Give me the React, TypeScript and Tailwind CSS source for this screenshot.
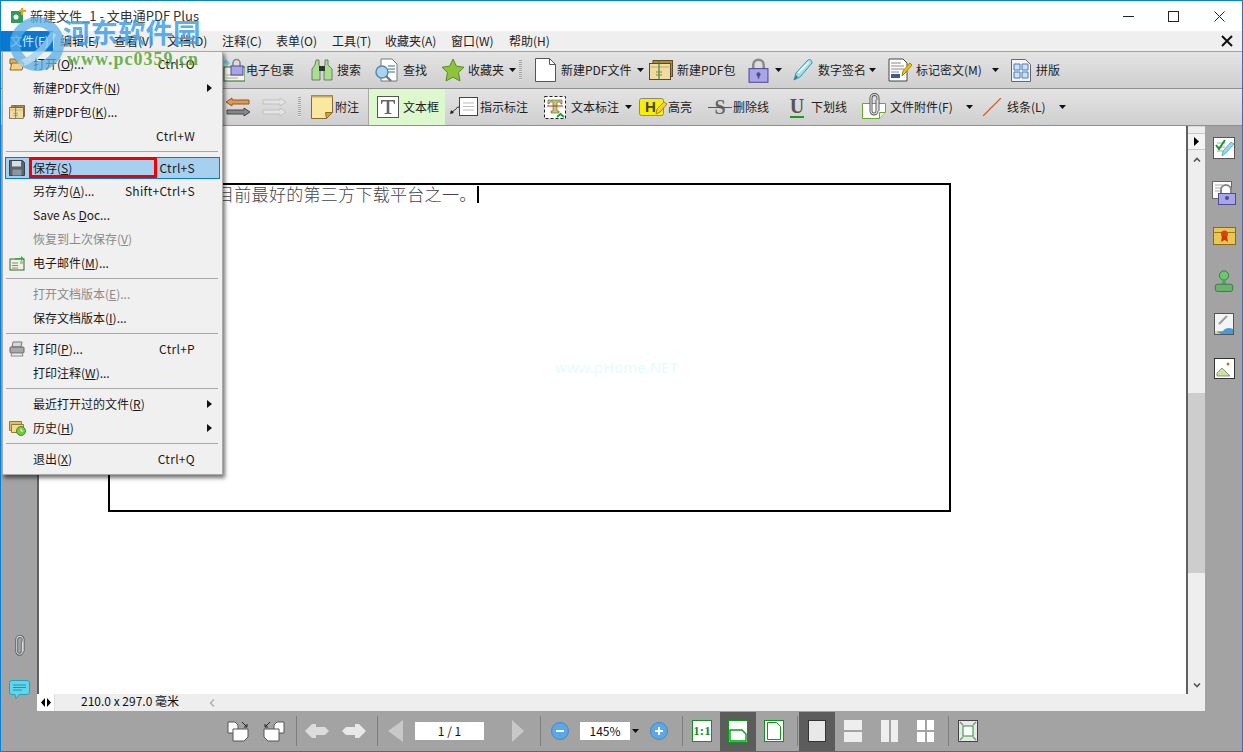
import React from 'react';

const font = "font-['Noto_Sans_CJK_SC','Noto_Sans',sans-serif]";

function Caret() {
  return (
    <svg width="7" height="4" viewBox="0 0 7 4" className="shrink-0">
      <path d="M0 0h7L3.5 4z" fill="#111" />
    </svg>
  );
}

function Grip() {
  return <div className="w-[3px] h-[20px] shrink-0 bg-[repeating-linear-gradient(to_bottom,#a0a0a0_0,#a0a0a0_1px,#e4e4e4_1px,#e4e4e4_2px)]" />;
}

function Lock({ size = 22 }: { size?: number }) {
  return (
    <svg width={size} height={size * 1.2} viewBox="0 0 20 24">
      <path d="M5 11V7a5 5 0 0 1 10 0v4" fill="none" stroke="#8a8a8a" strokeWidth="2.4" />
      <rect x="1" y="10.5" width="18" height="13" fill="#a9a6e8" stroke="#4d4a96" />
      <circle cx="10" cy="16" r="2" fill="#4d4a96" />
      <path d="M9.2 17h1.6v3H9.2z" fill="#4d4a96" />
    </svg>
  );
}

function Pen() {
  return (
    <svg width="22" height="24" viewBox="0 0 22 24">
      <path d="M2 22l2-7L16 2c2-1 4 0 4 3L8 19z" fill="#9fe0ee" stroke="#3a96a8" />
      <path d="M6 15L17 4" stroke="#fff" strokeWidth="1.4" />
      <path d="M2 22l2-5 2 2z" fill="#2a7686" />
    </svg>
  );
}

function Clip({ w = 14, h = 24 }: { w?: number; h?: number }) {
  return (
    <svg width={w} height={h} viewBox="0 0 14 24">
      <path d="M10 7v11a3 3 0 0 1-6 0V5a3.4 3.4 0 0 1 7 0v13" fill="none" stroke="#555" strokeWidth="3" />
      <path d="M10 7v11a3 3 0 0 1-6 0V5a3.4 3.4 0 0 1 7 0v13" fill="none" stroke="#ddd" strokeWidth="1.2" />
    </svg>
  );
}

function Email() {
  return (
    <svg width="22" height="24" viewBox="0 0 22 24">
      <rect x="1" y="9" width="21" height="14" fill="#f4f4ea" stroke="#2f6b2f" />
      <path d="M3 17h17M3 20h12" stroke="#aaa" />
      <path d="M1 4l2-3 4 4-3 3z" fill="#63cde0" />
      <path d="M10 9V5a3.5 3.5 0 0 1 7 0v4" fill="none" stroke="#888" strokeWidth="1.6" />
      <rect x="8" y="8" width="12" height="9" fill="#aaa6e4" stroke="#4d4a96" />
    </svg>
  );
}

function Binoculars() {
  return (
    <svg width="22" height="24" viewBox="0 0 22 24">
      <path d="M5 2h3v5l1 3v12H1V11l3-4z" fill="#a8e08c" stroke="#777" />
      <path d="M14 2h3v5l4 4v11h-8V10l1-3z" fill="#a8e08c" stroke="#777" />
      <rect x="8" y="8" width="6" height="5" fill="#333" />
    </svg>
  );
}

function Find() {
  return (
    <svg width="24" height="24" viewBox="0 0 24 24">
      <path d="M6 1h11l5 5v17H6z" fill="#fff" stroke="#777" />
      <path d="M13 8h7M13 11h7M13 14h7" stroke="#3d6a90" />
      <circle cx="7" cy="14" r="6" fill="#a8d4f0" stroke="#5588aa" strokeWidth="1.4" />
      <path d="M11 18l5 5" stroke="#777" strokeWidth="2.4" />
    </svg>
  );
}

function Star() {
  return (
    <svg width="24" height="24" viewBox="0 0 24 24">
      <path d="M12 1l3.4 7.2 7.6 1-5.5 5.4L19 23l-7-3.9L5 23l1.5-8.4L1 9.200l7.600-1z" fill="#8cc43c" stroke="#5c8a22" />
    </svg>
  );
}

function BlankDoc() {
  return (
    <svg width="21" height="24" viewBox="0 0 21 24">
      <path d="M.5.500h14l6 6v17H.5z" fill="#fff" stroke="#555" />
      <path d="M14.500.5v6h6" fill="none" stroke="#555" />
    </svg>
  );
}

function Pack({ w = 24, h = 20 }: { w?: number; h?: number }) {
  return (
    <svg width={w} height={h} viewBox="0 0 24 20">
      <rect x="4" y=".5" width="19.500" height="16" fill="#a88a50" stroke="#5a4a2a" />
      <rect x=".5" y="3.500" width="21" height="16" fill="#f0dca0" stroke="#5a4a2a" />
      <path d="M.5 7h21" stroke="#c8a860" />
      <path d="M10 .5v19" stroke="#3a8a2a" strokeWidth="1.2" />
      <path d="M7 12h6M7 15h6" stroke="#8a7a50" />
    </svg>
  );
}

function DocPencil() {
  return (
    <svg width="24" height="24" viewBox="0 0 24 24">
      <path d="M1 1h14l4 4v18H1z" fill="#fff" stroke="#444" />
      <path d="M3 5h10M3 8h13M3 11h13M3 14h8" stroke="#888" />
      <rect x="3" y="16" width="9" height="4" fill="#3e5c8a" />
      <path d="M14 18l1-5 7-8 2 2-7 8z" fill="#f4c40c" stroke="#a88400" />
    </svg>
  );
}

function GridDoc() {
  return (
    <svg width="20" height="24" viewBox="0 0 20 24">
      <path d="M.5 1.500h14l5 5v17H.500z" fill="#f2f4f8" stroke="#667" />
      <path d="M3 6h6v6H3zM11 6h6v6h-6zM3 14h6v6H3zM11 14h6v6h-6z" fill="#cfe0f6" stroke="#4a78b8" />
    </svg>
  );
}

function Arrows({ on }: { on: boolean }) {
  const a = on ? '#e8964c' : '#e4e4e4';
  const b = on ? '#888' : '#e4e4e4';
  const s = on ? '#8a5a2a' : '#c0c0c0';
  const s2 = on ? '#444' : '#c0c0c0';
  return (
    <svg width="24" height="20" viewBox="0 0 24 20">
      {on ? (
        <>
          <path d="M0 5l6-4v2h17v4H6v2z" fill={a} stroke={s} />
          <path d="M24 15l-6-4v2H1v4h17v2z" fill={b} stroke={s2} />
        </>
      ) : (
        <>
          <path d="M24 5l-6-4v2H1v4h17v2z" fill={a} stroke={s} />
          <path d="M24 15l-6-4v2H1v4h17v2z" fill={b} stroke={s2} />
        </>
      )}
    </svg>
  );
}

function Note() {
  return (
    <svg width="22" height="24" viewBox="0 0 22 24">
      <path d="M.5.500h21v17l-6 6H.5z" fill="#f8e8a0" stroke="#8a6a2a" />
      <path d="M.5.500h21v2H.5z" fill="#c8a860" />
      <path d="M15.500 23.500l-1-6 7 0z" fill="#e0a020" stroke="#8a6a2a" />
    </svg>
  );
}

function TBox() {
  return (
    <svg width="22" height="22" viewBox="0 0 22 22">
      <rect x=".5" y=".5" width="21" height="21" fill="#fff" stroke="#555" />
      <path d="M4 4h14v4h-.8l-1-2.600h-3.900v11.400l2.200.4v.8H7.500v-.8l2.200-.4V5.400H5.800l-1 2.600H4z" fill="#666" />
    </svg>
  );
}

function Callout() {
  return (
    <svg width="28" height="20" viewBox="0 0 28 20">
      <rect x="9.500" y=".5" width="18" height="18" fill="#fff" stroke="#444" />
      <path d="M13 6h11M13 9.500h11M13 13h11" stroke="#bbb" />
      <path d="M9 10c-3 0-3 3-7 5" fill="none" stroke="#222" />
      <path d="M0 17l1-4 3 3z" fill="#222" />
    </svg>
  );
}

function TMark() {
  return (
    <svg width="22" height="23" viewBox="0 0 22 23">
      <rect x=".5" y=".5" width="21" height="22" fill="#fff" stroke="#222" strokeDasharray="3 2" />
      <path d="M4 4h14v4h-1l-1-2h-3v9h2v2H7v-2h2V6H6L5 8H4z" fill="#c8cc58" stroke="#555" strokeWidth=".6" />
      <path d="M3 10h16" stroke="#d02020" />
      <path d="M13 21l3.500-3 3.500 3" fill="none" stroke="#1a9a3a" strokeWidth="1.800" />
    </svg>
  );
}

function HMark() {
  return (
    <svg width="28" height="18" viewBox="0 0 28 18">
      <rect x=".5" y=".5" width="24" height="17" rx="2" fill="#f8f000" stroke="#888" />
      <text x="6" y="14" fontSize="15" fontWeight="700" fill="#444" className="font-['Liberation_Sans',sans-serif]">H</text>
      <path d="M17 16l1-5 7-7 3 2-7 8z" fill="#f4d040" stroke="#a88400" />
    </svg>
  );
}

function Clipped() {
  return (
    <div className="relative w-[24px] h-[24px]">
      <svg width="24" height="24" viewBox="0 0 24 24">
        <path d="M.5 8.500h23v9l-6 6H.5z" fill="#fff" stroke="#6aa82a" />
        <path d="M17.500 23.500v-6h6" fill="#e8f4d0" stroke="#6aa82a" />
      </svg>
      <div className="absolute left-[5px] top-[-2px]">
        <Clip w={14} h={24} />
      </div>
    </div>
  );
}

function Tool({ w, icon, box, children }: { w: string; icon: React.ReactNode; box: string; children: React.ReactNode }) {
  return (
    <div className={`flex items-center shrink-0 ${w}`}>
      <div className={`flex items-center justify-center shrink-0 ${box}`}>{icon}</div>
      {children}
    </div>
  );
}

function Key({ c }: { c: string }) {
  return (
    <>
      (<u>{c}</u>)
    </>
  );
}

type Row = {
  label: React.ReactNode;
  keys?: string;
  icon?: React.ReactNode;
  arrow?: boolean;
  off?: boolean;
  on?: boolean;
};

const FolderIcon = (
  <svg width="16" height="13" viewBox="0 0 16 13">
    <path d="M1 1h5l1 2h6v3H1z" fill="#d8b060" stroke="#8a6a2a" />
    <path d="M1 12l2-7h12l-2 7z" fill="#f4d080" stroke="#8a6a2a" />
  </svg>
);

const FloppyIcon = (
  <svg width="16" height="16" viewBox="0 0 16 16">
    <path d="M.5.500h13l2 2v13H.5z" fill="#5a6470" stroke="#3a424c" />
    <rect x="3" y="1" width="9" height="5.500" fill="#d6dde4" />
    <rect x="3.500" y="9.500" width="9" height="6" fill="#8a96a2" />
  </svg>
);

const EmailIcon = (
  <svg width="16" height="16" viewBox="0 0 16 16">
    <rect x="1" y="4" width="14" height="11" fill="#f0f0e0" stroke="#2f6b2f" />
    <path d="M3 8h6M3 10.500h6M3 13h6" stroke="#888" />
    <path d="M11 6h3v3h-3z" fill="#bbb" />
    <path d="M6 3h6V1l3 2.500L12 6V4.500H6z" fill="#35b040" />
  </svg>
);

const PrinterIcon = (
  <svg width="16" height="16" viewBox="0 0 16 16">
    <path d="M4 1h9l-1 5H3z" fill="#d8d8d8" stroke="#777" />
    <rect x="1" y="6" width="14" height="6" rx="1" fill="#a8a8a8" stroke="#666" />
    <path d="M3 12h10l1 3H2z" fill="#e6eef4" stroke="#888" />
  </svg>
);

const HistoryIcon = (
  <svg width="17" height="16" viewBox="0 0 17 16">
    <path d="M.5 1.500h12v9H.5z" fill="#e0c070" stroke="#9a7a30" />
    <path d="M2.500 4.500h12v8h-12z" fill="#f4d890" stroke="#9a7a30" />
    <circle cx="12" cy="11" r="4.500" fill="#7ac83a" stroke="#4a8a20" />
    <path d="M12 8.500V11h2.200" fill="none" stroke="#fff" />
  </svg>
);

const groups: Row[][] = [
  [
    { label: <>打开<Key c="O" />...</>, keys: 'Ctrl+O', icon: FolderIcon },
    { label: <>新建PDF文件<Key c="N" /></>, arrow: true },
    { label: <>新建PDF包<Key c="K" />...</>, icon: <Pack w={16} h={14} /> },
    { label: <>关闭<Key c="C" /></>, keys: 'Ctrl+W' },
  ],
  [
    { label: <>保存<Key c="S" /></>, keys: 'Ctrl+S', icon: FloppyIcon, on: true },
    { label: <>另存为<Key c="A" />...</>, keys: 'Shift+Ctrl+S' },
    { label: <>Save As <u>D</u>oc...</> },
    { label: <>恢复到上次保存<Key c="V" /></>, off: true },
    { label: <>电子邮件<Key c="M" />...</>, icon: EmailIcon },
  ],
  [
    { label: <>打开文档版本<Key c="E" />...</>, off: true },
    { label: <>保存文档版本<Key c="I" />...</> },
  ],
  [
    { label: <>打印<Key c="P" />...</>, keys: 'Ctrl+P', icon: PrinterIcon },
    { label: <>打印注释<Key c="W" />...</> },
  ],
  [
    { label: <>最近打开过的文件<Key c="R" /></>, arrow: true },
    { label: <>历史<Key c="H" /></>, arrow: true, icon: HistoryIcon },
  ],
  [{ label: <>退出<Key c="X" /></>, keys: 'Ctrl+Q' }],
];

function MenuRow({ row }: { row: Row }) {
  return (
    <div className={`relative flex items-center h-[24px] text-[12px] ${row.on ? 'pt-[2px]' : ''} ${row.off ? 'text-[#8a8a8a]' : 'text-[#1a1a1a]'}`}>
      {row.on && (
        <>
          <div className="absolute left-[0px] right-[2px] top-[2px] bottom-[0px] bg-[#a6cff0] border border-[#0a78d0]" />
          <div className="absolute left-[24px] top-[2px] w-[128px] h-[21px] border-[3px] border-[#f00000]" />
        </>
      )}
      <div className="relative w-[28px] pl-[4px] shrink-0 flex items-center">{row.icon}</div>
      <div className="relative flex-1 whitespace-nowrap">{row.label}</div>
      {row.keys && <div className="relative mr-[27px] tracking-[0.3px] whitespace-nowrap">{row.keys}</div>}
      {row.arrow && (
        <svg width="5" height="8" viewBox="0 0 5 8" className="relative mr-[10px]">
          <path d="M0 0l5 4-5 4z" fill="#111" />
        </svg>
      )}
    </div>
  );
}

function FileMenu() {
  return (
    <div className="absolute left-[1px] top-[50px] z-20 w-[221px] h-[424px] pl-[2px] bg-[#f0f0f0] border border-[#a8a8a8] shadow-[2px_3px_4px_rgba(0,0,0,0.55)]">
      {groups.map((rows, i) => (
        <div key={i}>
          {i > 0 && (
            <div className="h-[7px] flex items-center pr-[4px] pl-[1px]">
              <div className="w-full h-[1px] bg-[#a8a8a8]" />
            </div>
          )}
          {rows.map((row, j) => (
            <MenuRow key={j} row={row} />
          ))}
        </div>
      ))}
    </div>
  );
}

function Watermark() {
  return (
    <div className="absolute left-[8px] top-[14px] z-30 pointer-events-none">
      <svg width="56" height="58" viewBox="0 0 56 58" className="opacity-75">
        <path d="M28 2a27 27 0 1 0 .1 0zM28 12a17 17 0 1 1-.1 0z" fill="#5aaee6" />
        <path d="M8 46c10-2 24-12 34-30l5 4C38 38 22 50 12 52z" fill="#9fd2f2" />
      </svg>
      <div className="absolute left-[54px] top-[-1px] whitespace-nowrap text-[27.5px] leading-[34px] font-bold text-[#3f9fe6]/85 font-['Noto_Sans_CJK_SC',sans-serif]">河东软件园</div>
      <div className="absolute left-[58px] top-[34px] whitespace-nowrap text-[18px] leading-[20px] tracking-[1px] font-bold text-[#5aa83a]/90 font-['Liberation_Serif',serif]">www.pc0359.cn</div>
    </div>
  );
}

function Toolbars() {
  return (
    <div className="text-[12px] text-[#222]">
      <div className="flex items-center h-[37px] pl-[221px] bg-gradient-to-b from-[#e4e4e4] to-[#cfcfcf] border-b border-[#909090]">
        <Tool w="w-[89px]" box="w-[24px]" icon={<Email />}><span>电子包裹</span></Tool>
        <Tool w="w-[64px]" box="w-[22px] mr-[4px]" icon={<Binoculars />}><span>搜索</span></Tool>
        <Tool w="w-[66px]" box="w-[24px] mr-[4px]" icon={<Find />}><span>查找</span></Tool>
        <Tool w="w-[78px]" box="w-[24px] mr-[3px]" icon={<Star />}><span>收藏夹</span><span className="ml-[5px]"><Caret /></span></Tool>
        <Grip />
        <div className="w-[13px] shrink-0" />
        <Tool w="w-[114px]" box="w-[21px] mr-[5px]" icon={<BlankDoc />}><span>新建PDF文件</span><span className="ml-[6px]"><Caret /></span></Tool>
        <Tool w="w-[99px]" box="w-[24px] mr-[4px]" icon={<Pack />}><span>新建PDF包</span></Tool>
        <Tool w="w-[44px]" box="w-[21px] mr-[6px]" icon={<Lock />}><Caret /></Tool>
        <Tool w="w-[96px]" box="w-[22px] mr-[4px]" icon={<Pen />}><span>数字签名</span><span className="ml-[3px]"><Caret /></span></Tool>
        <Tool w="w-[123px]" box="w-[24px] mr-[4px]" icon={<DocPencil />}><span>标记密文(M)</span><span className="ml-[10px]"><Caret /></span></Tool>
        <Tool w="w-[60px]" box="w-[20px] mr-[5px]" icon={<GridDoc />}><span>拼版</span></Tool>
      </div>
      <div className="flex items-center h-[37px] pl-[225px] bg-gradient-to-b from-[#e4e4e4] to-[#cfcfcf] border-b border-[#909090]">
        <div className="w-[36px] shrink-0"><Arrows on /></div>
        <div className="w-[36px] shrink-0"><Arrows on={false} /></div>
        <Grip />
        <div className="w-[10px] shrink-0" />
        <Tool w="w-[57px]" box="w-[22px] mr-[2px]" icon={<Note />}><span>附注</span></Tool>
        <Tool w="w-[77px] h-[36px] pl-[8px] bg-[#dcf8cc] border-l border-[#a8a8a8]" box="w-[22px] mr-[4px]" icon={<TBox />}><span>文本框</span></Tool>
        <Tool w="w-[99px] pl-[5px]" box="w-[28px] mr-[2px]" icon={<Callout />}><span>指示标注</span></Tool>
        <Tool w="w-[95px]" box="w-[22px] mr-[5px]" icon={<TMark />}><span>文本标注</span><span className="ml-[6px]"><Caret /></span></Tool>
        <Tool w="w-[70px]" box="w-[28px] mr-[1px]" icon={<HMark />}><span>高亮</span></Tool>
        <Tool w="w-[80px]" box="w-[22px] mr-[2px]" icon={<span className="relative text-[20px] leading-[20px] font-bold text-[#666] font-['Liberation_Serif',serif] after:absolute after:left-[-6px] after:right-[-6px] after:top-[10px] after:h-[1px] after:bg-[#d02020]">S</span>}><span>删除线</span></Tool>
        <Tool w="w-[73px]" box="w-[16px] mr-[6px]" icon={<span className="text-[20px] leading-[19px] font-bold text-[#555] border-b-2 border-[#1a9a1a] font-['Liberation_Serif',serif]">U</span>}><span>下划线</span></Tool>
        <Tool w="w-[121px]" box="w-[24px] mr-[4px]" icon={<Clipped />}><span>文件附件(F)</span><span className="ml-[13px]"><Caret /></span></Tool>
        <Tool w="w-[88px]" box="w-[18px] mr-[6px]" icon={<svg width="18" height="18" viewBox="0 0 18 18"><path d="M0 18L18 0" stroke="#d84a1a" strokeWidth="1.2" /></svg>}><span>线条(L)</span><span className="ml-[13px]"><Caret /></span></Tool>
      </div>
    </div>
  );
}

function RightPanel() {
  return (
    <div className="w-[37px] shrink-0 flex flex-col items-center gap-[22px] pt-[11px] pl-[1px] bg-[#a3a3a3]">
      <svg width="22" height="22" viewBox="0 0 22 22">
        <rect x=".5" y=".5" width="21" height="21" fill="#fff" stroke="#555" />
        <path d="M4 6h8M4 10h8M4 14h6" stroke="#aaa" />
        <path d="M3 8l3 4 6-9" fill="none" stroke="#1a9a2a" strokeWidth="2" />
        <path d="M9 19l1-5 8-9 3 2-8 9z" fill="#8fdcec" stroke="#3a96a8" strokeWidth=".7" />
      </svg>
      <div className="relative w-[24px] h-[24px]">
        <svg width="24" height="24" viewBox="0 0 24 24">
          <rect x=".5" y=".5" width="19" height="17" fill="#fff" stroke="#666" />
          <path d="M3 4h8M3 7h6M3 10h5" stroke="#aaa" />
          <path d="M9 12V9a5 5 0 0 1 10 0v3" fill="none" stroke="#888" strokeWidth="2" />
          <rect x="6.500" y="12.500" width="17" height="11" fill="#a9a6e8" stroke="#4d4a96" />
          <circle cx="15" cy="17" r="2" fill="#4d4a96" />
        </svg>
      </div>
      <svg width="23" height="18" viewBox="0 0 23 18">
        <rect x=".5" y=".5" width="22" height="17" fill="#e8c850" stroke="#8a6a1a" />
        <path d="M.5 5.500h22" stroke="#9a7a20" />
        <circle cx="11.500" cy="7" r="3.500" fill="#e04010" />
        <path d="M9 9l-1 6 3.500-2 3.500 2-1-6z" fill="#d03808" />
      </svg>
      <svg width="20" height="22" viewBox="0 0 20 24" className="mt-[3px]">
        <circle cx="10" cy="6" r="5" fill="#6cc870" stroke="#2f7a36" />
        <rect x="8" y="10" width="4" height="6" fill="#5aa060" />
        <rect x=".5" y="15.500" width="19" height="8" rx="2.500" fill="#6cb070" stroke="#2f7a36" />
      </svg>
      <svg width="20" height="22" viewBox="0 0 20 22" className="mt-[-1px]">
        <rect x=".5" y=".5" width="19" height="21" fill="#f4f4f4" stroke="#555" />
        <path d="M5 11l8-8" stroke="#999" strokeWidth="2" />
        <path d="M1 20c3-3 5-1 8-2 2-3 6-4 10-2v5H1z" fill="#4a9ad0" />
        <path d="M1 18l6 3H1z" fill="#e8d080" />
      </svg>
      <svg width="21" height="21" viewBox="0 0 21 21" className="mt-[1px]">
        <rect x=".5" y=".5" width="20" height="20" fill="#fff" stroke="#333" />
        <path d="M3 15l5-5 8 8H3z" fill="#cce0a0" stroke="#555" strokeWidth=".6" />
        <circle cx="14" cy="6" r="1.500" fill="#f05a20" />
      </svg>
    </div>
  );
}

function Scrollbar() {
  return (
    <div className="w-[17px] shrink-0 flex flex-col bg-[#eeeeee] border-t border-[#d8d8d8]">
      <div className="h-[6px]" />
      <div className="h-[17px] flex items-center justify-center bg-[#f4f4f4] border-y border-[#c8c8c8]">
        <svg width="5" height="9" viewBox="0 0 5 9"><path d="M0 0l5 4.500L0 9z" fill="#000" /></svg>
      </div>
      <div className="h-[18px] flex items-center justify-center">
        <svg width="8" height="5" viewBox="0 0 8 5"><path d="M1 4.500l3-3 3 3" fill="none" stroke="#555" strokeWidth="1.600" /></svg>
      </div>
      <div className="h-[225px]" />
      <div className="h-[180px] bg-[#cdcdcd]" />
      <div className="flex-1" />
      <div className="h-[18px] flex items-center justify-center">
        <svg width="8" height="5" viewBox="0 0 8 5"><path d="M1 .5l3 3 3-3" fill="none" stroke="#555" strokeWidth="1.600" /></svg>
      </div>
    </div>
  );
}

function Page() {
  return (
    <div className="flex-1 min-h-0 relative bg-white border-l-2 border-r-2 border-[#606060] pl-[69px] pt-[57px]">
      <div className="w-[843px] h-[329px] border-2 border-black pl-[107px]">
        <div className="flex items-center h-[18px] text-[17px] leading-[18px] tracking-[0.3px] text-[#444] font-light whitespace-nowrap font-['Noto_Sans_CJK_SC',serif]">
          目前最好的第三方下载平台之一。
          <span className="mt-[1px] w-[2px] h-[17px] bg-black" />
        </div>
      </div>
      <div className="absolute left-[516px] top-[232px] text-[15px] leading-[18px] text-[#e8fbfb] font-['Noto_Sans',sans-serif]">www.pHome.NET</div>
    </div>
  );
}

function Divider() {
  return <div className="w-[1px] h-[30px] shrink-0 bg-[#7e7e7e]" />;
}

function BottomDoc({ flip }: { flip?: boolean }) {
  return (
    <svg width="22" height="21" viewBox="0 0 22 21" className={flip ? '-scale-x-100' : ''}>
      <path d="M1 1h7l3 3v8H1z" fill="#fff" stroke="#555" />
      <path d="M6 8h15v8l-4 4H6z" fill="#fff" stroke="#555" />
      <path d="M15 1l5 5M20 3v3h-3" fill="none" stroke="#222" />
    </svg>
  );
}

function Round({ plus }: { plus?: boolean }) {
  return (
    <svg width="18" height="18" viewBox="0 0 18 18">
      <circle cx="9" cy="9" r="8.500" fill="#5aa8e8" stroke="#4a88c0" />
      <path d="M5 9h8" stroke="#fff" strokeWidth="2" />
      {plus && <path d="M9 5v8" stroke="#fff" strokeWidth="2" />}
    </svg>
  );
}

function BottomBar() {
  return (
    <div className="h-[40px] shrink-0 flex items-center pl-[226px] text-[12px] bg-[#a3a3a3]">
      <div className="w-[36px] shrink-0"><BottomDoc /></div>
      <div className="w-[33px] shrink-0"><BottomDoc flip /></div>
      <Divider />
      <svg width="24" height="14" viewBox="0 0 24 14" className="ml-[8px] shrink-0"><path d="M0 7l7-7h4v3h9l4 4-4 4h-9v3H7z" fill="#dcdcdc" /></svg>
      <svg width="24" height="14" viewBox="0 0 24 14" className="ml-[13px] shrink-0"><path d="M24 7l-7-7h-4v3H4L0 7l4 4h9v3h4z" fill="#e8e8e8" /></svg>
      <div className="ml-[11px] shrink-0"><Divider /></div>
      <svg width="15" height="22" viewBox="0 0 15 22" className="ml-[10px] shrink-0"><path d="M15 0L0 11l15 11z" fill="#c8c8c8" /></svg>
      <div className="ml-[12px] w-[69px] h-[18px] shrink-0 flex items-center justify-center bg-white text-[#111]">1 / 1</div>
      <svg width="12" height="22" viewBox="0 0 12 22" className="ml-[28px] shrink-0"><path d="M0 0l12 11L0 22z" fill="#c8c8c8" /></svg>
      <div className="ml-[16px] shrink-0"><Divider /></div>
      <div className="ml-[10px] shrink-0"><Round /></div>
      <div className="ml-[11px] w-[50px] h-[18px] shrink-0 flex items-center justify-center bg-white text-[#111]">145%</div>
      <div className="ml-[2px] shrink-0"><Caret /></div>
      <div className="ml-[11px] shrink-0"><Round plus /></div>
      <div className="ml-[14px] shrink-0"><Divider /></div>
      <div className="ml-[9px] w-[20px] h-[22px] shrink-0 flex items-center justify-center bg-white border border-[#1a8a2a] text-[13px] font-bold text-[#1a8a2a] font-['Liberation_Serif',serif]">1:1</div>
      <div className="ml-[8px] w-[36px] h-[39px] shrink-0 flex items-center justify-center bg-[#5c5c5c]">
        <svg width="20" height="23" viewBox="0 0 20 23">
          <rect x=".5" y=".5" width="19" height="22" fill="#fff" stroke="#0a9a1a" />
          <path d="M2 10h12l4 4v7H2z" fill="#fff" stroke="#0a9a1a" strokeWidth="1.400" />
        </svg>
      </div>
      <svg width="20" height="22" viewBox="0 0 20 22" className="ml-[8px] shrink-0">
        <rect x=".5" y=".5" width="19" height="21" fill="#fff" stroke="#1a8a2a" />
        <path d="M3.500 2.500h9l4 4v13h-13z" fill="#fff" stroke="#0a9a1a" />
      </svg>
      <div className="ml-[13px] shrink-0"><Divider /></div>
      <div className="ml-[1px] w-[36px] h-[39px] shrink-0 flex items-center justify-center bg-[#5c5c5c]">
        <div className="w-[18px] h-[22px] bg-[#e8e8e8] border border-[#333]" />
      </div>
      <div className="ml-[9px] w-[18px] h-[22px] shrink-0 flex flex-col gap-[2px]">
        <div className="flex-1 bg-[#eeeeee]" />
        <div className="flex-1 bg-[#eeeeee]" />
      </div>
      <div className="ml-[19px] w-[17px] h-[22px] shrink-0 flex gap-[2px]">
        <div className="flex-1 bg-[#eeeeee]" />
        <div className="flex-1 bg-[#eeeeee]" />
      </div>
      <div className="ml-[19px] w-[17px] h-[22px] shrink-0 grid grid-cols-2 gap-[2px]">
        <div className="bg-white" />
        <div className="bg-white" />
        <div className="bg-white" />
        <div className="bg-white" />
      </div>
      <div className="ml-[14px] shrink-0"><Divider /></div>
      <svg width="20" height="22" viewBox="0 0 20 22" className="ml-[9px] shrink-0">
        <rect x=".5" y=".5" width="19" height="21" fill="#e8e8e8" stroke="#444" />
        <rect x="5" y="6" width="10" height="10" fill="#fff" stroke="#1a9a2a" />
        <path d="M2 2l3 3M18 2l-3 3M2 20l3-3M18 20l-3-3" stroke="#888" strokeWidth="1.400" />
      </svg>
    </div>
  );
}

export default function App() {
  return (
    <div className={`relative w-[1243px] h-[752px] overflow-hidden flex flex-col bg-white border border-[#0a7fd4] ${font}`}>
      <div className="h-[30px] shrink-0 flex items-center bg-white">
        <svg width="16" height="16" viewBox="0 0 16 16" className="ml-[9px] shrink-0">
          <rect x="1" y="3" width="12" height="12" fill="#2f9a5a" />
          <circle cx="6" cy="9" r="2.500" fill="#fff" />
          <path d="M12 0v7M9 3h7" stroke="#f0a010" strokeWidth="2" />
        </svg>
        <div className="ml-[4px] text-[13px] text-[#333]">新建文件_1 - 文电通PDF Plus</div>
        <div className="ml-auto flex items-center text-[#222]">
          <div className="w-[45px] flex justify-center">
            <div className="w-[11px] h-[1px] bg-[#222]" />
          </div>
          <div className="w-[45px] flex justify-center">
            <div className="w-[11px] h-[11px] border border-[#222]" />
          </div>
          <div className="w-[46px] flex justify-center">
            <svg width="11" height="11" viewBox="0 0 11 11"><path d="M.5.500l10 10M10.500.500l-10 10" stroke="#222" /></svg>
          </div>
        </div>
      </div>

      <div className="h-[21px] shrink-0 flex items-center text-[12px] text-[#222] bg-[#efefef] border-b border-[#a0a0a0]">
        <div className="w-[52px] h-full shrink-0 flex items-center pl-[9px] bg-[#0a78d0] text-[#d8ecfa]">文件(F)</div>
        <div className="w-[54px] ml-[7px] shrink-0">编辑(E)</div>
        <div className="w-[53px] shrink-0">查看(V)</div>
        <div className="w-[55px] shrink-0">文档(D)</div>
        <div className="w-[54px] shrink-0">注释(C)</div>
        <div className="w-[56px] shrink-0">表单(O)</div>
        <div className="w-[53px] shrink-0">工具(T)</div>
        <div className="w-[66px] shrink-0">收藏夹(A)</div>
        <div className="w-[58px] shrink-0">窗口(W)</div>
        <div className="shrink-0">帮助(H)</div>
        <svg width="12" height="12" viewBox="0 0 12 12" className="ml-auto mr-[9px]"><path d="M1 1l10 10M11 1L1 11" stroke="#111" strokeWidth="2" /></svg>
      </div>

      <Toolbars />

      <div className="flex-1 min-h-0 flex">
        <div className="w-[36px] shrink-0 flex flex-col items-center justify-end pb-[12px] gap-[23px] bg-[#a3a3a3]">
          <Clip w={13} h={22} />
          <svg width="21" height="19" viewBox="0 0 21 19">
            <path d="M3 .5h15a2.500 2.500 0 0 1 2.500 2.500v9a2.500 2.500 0 0 1-2.500 2.500H10L7 18.500l-1-4H3A2.500 2.500 0 0 1 .5 12V3A2.500 2.500 0 0 1 3 .5z" fill="#5fd6ea" stroke="#2aa0b8" />
            <path d="M4 5h13M4 7.500h13M4 10h9" stroke="#2a90a8" />
          </svg>
        </div>
        <div className="flex-1 min-w-0 flex flex-col">
          <div className="flex-1 min-h-0 flex">
            <Page />
            <Scrollbar />
          </div>
          <div className="h-[17px] shrink-0 flex items-center bg-[#eeeeee]">
            <div className="w-[17px] h-full shrink-0 flex items-center justify-center bg-white text-[9px] text-black">
              <svg width="10" height="9" viewBox="0 0 10 9"><path d="M4 0L0 4.500 4 9zM6 0l4 4.500L6 9z" fill="#000" /></svg>
            </div>
            <div className="w-[150px] shrink-0 pl-[26px] pb-[3px] leading-[14px] text-[12px] text-[#111] border-l border-[#ddd]">210.0 x 297.0 毫米</div>
            <svg width="6" height="8" viewBox="0 0 6 8" className="ml-[5px]"><path d="M5 .5L1.500 4 5 7.500" fill="none" stroke="#b0b0b0" strokeWidth="1.500" /></svg>
          </div>
        </div>
        <RightPanel />
      </div>

      <BottomBar />

      <FileMenu />
      <Watermark />
    </div>
  );
}
